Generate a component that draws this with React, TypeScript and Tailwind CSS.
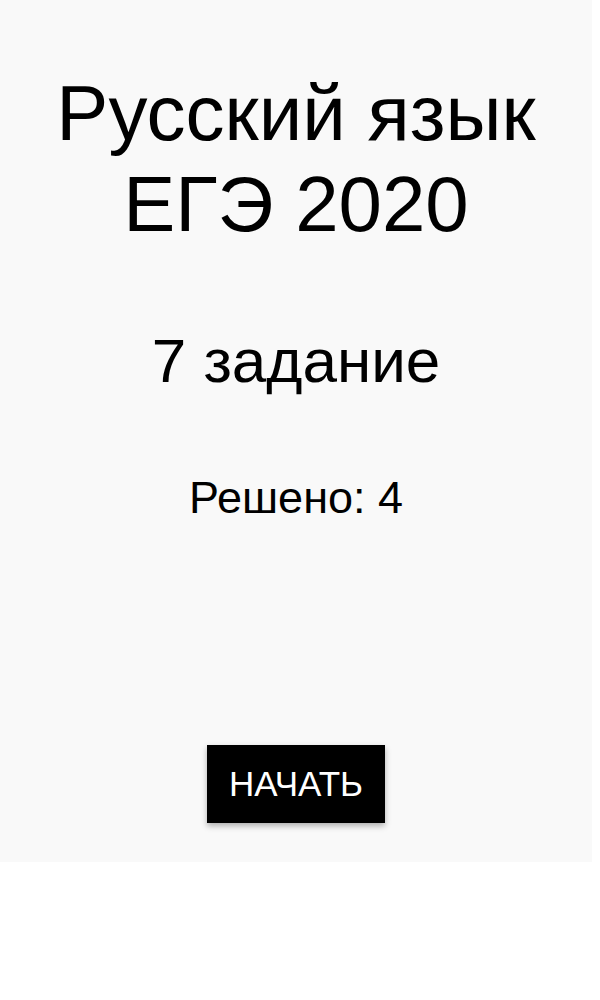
import React from 'react';

const font = { fontFamily: '"Liberation Sans", Arial, sans-serif' };

const StartScreen: React.FC = () => {
  return (
    <div
      style={font}
      className="w-[592px] h-[862px] bg-[#f9f9f9] flex flex-col items-center text-black"
    >
      <h1 className="mt-[68px] text-[78px] leading-[91px] text-center font-normal">
        Русский язык
        <br />
        ЕГЭ 2020
      </h1>
      <h2 className="mt-[79px] text-[62px] leading-[64px] font-normal">7 задание</h2>
      <p className="mt-[81px] text-[45px] leading-[48px]">Решено: 4</p>
      <button className="mt-[223px] w-[178px] h-[78px] bg-black text-white text-[35px] shadow-[0_3px_6px_rgba(0,0,0,0.3)]">
        НАЧАТЬ
      </button>
    </div>
  );
};

export default function App() {
  return (
    <div className="w-[600px] min-h-[1000px] bg-white">
      <StartScreen />
    </div>
  );
}
